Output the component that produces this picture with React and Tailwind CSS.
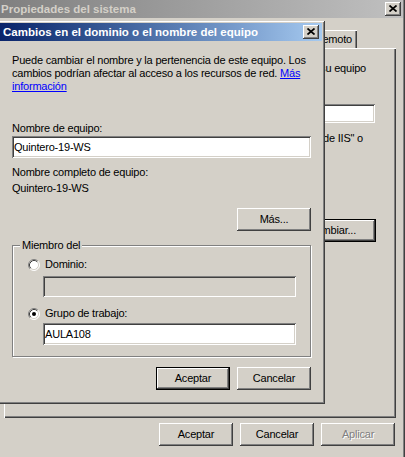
import React from "react";

const raised =
  "shadow-[inset_-1px_-1px_#404040,inset_1px_1px_#ffffff,inset_-2px_-2px_#808080,inset_2px_2px_#d4d0c8]";
const sunken =
  "shadow-[inset_1px_1px_#808080,inset_-1px_-1px_#ffffff,inset_2px_2px_#404040,inset_-2px_-2px_#d4d0c8]";

function CloseButton() {
  return (
    <div className={`flex h-[14px] w-[16px] items-center justify-center bg-[#d4d0c8] ${raised}`}>
      <svg width="8" height="7" viewBox="0 0 8 7" className="mt-[-1px]">
        <path d="M0.5 0.5 L7.5 6.5 M7.5 0.5 L0.5 6.5" stroke="#000" strokeWidth="1.7" />
      </svg>
    </div>
  );
}

function Button({ children, isDefault, disabled, className = "" }) {
  return (
    <div
      className={`flex h-[23px] w-[74px] items-center justify-center bg-[#d4d0c8] ${
        isDefault ? "border border-black" : ""
      } ${className}`}
    >
      <div className={`flex h-full w-full items-center justify-center ${raised}`}>
        <span className={disabled ? "text-[#808080] [text-shadow:1px_1px_#ffffff]" : ""}>{children}</span>
      </div>
    </div>
  );
}

function Radio({ checked }) {
  return (
    <svg width="12" height="12" viewBox="0 0 12 12">
      <circle cx="6" cy="6" r="5" fill="#ffffff" />
      <path d="M2.11 9.89 A5.5 5.5 0 0 1 9.89 2.11" stroke="#808080" fill="none" />
      <path d="M9.89 2.11 A5.5 5.5 0 0 1 2.11 9.89" stroke="#ffffff" fill="none" />
      <path d="M2.82 9.18 A4.5 4.5 0 0 1 9.18 2.82" stroke="#404040" fill="none" />
      <path d="M9.18 2.82 A4.5 4.5 0 0 1 2.82 9.18" stroke="#d4d0c8" fill="none" />
      {checked && <circle cx="6" cy="6" r="2" fill="#000" />}
    </svg>
  );
}

export default function App() {
  return (
    <div className="relative h-[457px] w-[405px] overflow-hidden bg-[#d4d0c8] font-['Liberation_Sans',Arial,sans-serif] text-[11px] leading-[13px] tracking-[-0.2px] text-black">
      {/* Ventana de fondo: Propiedades del sistema */}
      <div className="flex h-full flex-col pr-[2px] shadow-[inset_-1px_0_#404040,inset_-2px_0_#808080]">
        <div className="flex h-[18px] items-center justify-between bg-gradient-to-r from-[#808080] to-[#c0c0c0] pl-[1px] pr-[2px]">
          <span className="text-[11.5px] font-bold tracking-normal text-[#d4d0c8]">Propiedades del sistema</span>
          <CloseButton />
        </div>

        <div className="mt-[12px] flex h-[18px] justify-end pr-[46px]">
          <div className="flex h-[18px] items-center border-t border-l border-white bg-[#d4d0c8] pl-[6px] pr-[5px] shadow-[inset_-1px_0_#404040,inset_-2px_0_#808080]">
            Acceso remoto
          </div>
        </div>

        <div className="ml-[4px] mr-[7px] flex h-[370px] flex-col items-end border-t border-l border-white shadow-[inset_-1px_-1px_#404040,inset_-2px_-2px_#808080]">
          <div className="mt-[13px] mr-[30px] whitespace-nowrap">
            Windows usa la siguiente información para identificar su equipo
          </div>
          <div className={`mt-[29px] mr-[21px] h-[19px] w-[300px] bg-white ${sunken}`} />
          <div className="mt-[9px] mr-[33px] whitespace-nowrap">
            Por ejemplo: "Servidor de producción de IIS" o
          </div>
          <Button isDefault className="mt-[74px] mr-[20px] h-[21px] w-[88px]">
            Cambiar...
          </Button>
        </div>

        <div className="mt-[5px] flex justify-end gap-[7px] pr-[8px]">
          <Button>Aceptar</Button>
          <Button>Cancelar</Button>
          <Button disabled>Aplicar</Button>
        </div>
      </div>

      {/* Diálogo: Cambios en el dominio o el nombre del equipo */}
      <div className="absolute left-[-3px] top-[20px] flex h-[384px] w-[328px] flex-col bg-[#d4d0c8] p-[3px] shadow-[inset_1px_1px_#d4d0c8,inset_-1px_-1px_#404040,inset_2px_2px_#ffffff,inset_-2px_-2px_#808080]">
        <div className="flex h-[18px] items-center justify-between bg-gradient-to-r from-[#0a246a] to-[#a6caf0] pl-[3px] pr-[3px]">
          <span className="text-[11.5px] font-bold tracking-normal text-white">
            Cambios en el dominio o el nombre del equipo
          </span>
          <CloseButton />
        </div>

        <div className="flex flex-col pl-[12px] pr-[11px]">
          <p className="mt-[13px] whitespace-nowrap">
            Puede cambiar el nombre y la pertenencia de este equipo. Los
            <br />
            cambios podrían afectar al acceso a los recursos de red.{" "}
            <span className="text-[#0000ff] underline">Más</span>
            <br />
            <span className="text-[#0000ff] underline">información</span>
          </p>

          <div className="mt-[29px]">Nombre de equipo:</div>
          <div className={`mt-[1px] flex h-[22px] items-center bg-white pl-[2px] ${sunken}`}>Quintero-19-WS</div>

          <div className="mt-[8px]">Nombre completo de equipo:</div>
          <div className="mt-[3px]">Quintero-19-WS</div>

          <div className="mt-[13px] flex justify-end">
            <Button>Más...</Button>
          </div>

          <div className="relative mt-[14px] h-[112px] border border-[#808080] shadow-[1px_1px_#ffffff,inset_1px_1px_#ffffff]">
            <span className="absolute left-[7px] top-[-7px] bg-[#d4d0c8] px-[2px]">Miembro del</span>
            <div className="mt-[12px] flex items-center gap-[5px] pl-[15px]">
              <Radio />
              <span>Dominio:</span>
            </div>
            <div className={`mt-[5px] ml-[30px] h-[21px] w-[253px] bg-[#d4d0c8] ${sunken}`} />
            <div className="mt-[10px] flex items-center gap-[5px] pl-[15px]">
              <Radio checked />
              <span>Grupo de trabajo:</span>
            </div>
            <div className={`mt-[3px] ml-[30px] flex h-[22px] w-[253px] items-center bg-white pl-[2px] ${sunken}`}>
              AULA108
            </div>
          </div>

          <div className="mt-[10px] flex justify-end gap-[7px]">
            <Button isDefault>Aceptar</Button>
            <Button>Cancelar</Button>
          </div>
        </div>
      </div>
    </div>
  );
}
